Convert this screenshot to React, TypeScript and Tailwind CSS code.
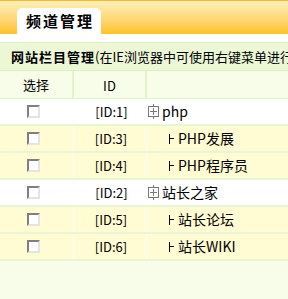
const rows = [
  { id: 1, name: "php", level: 0, odd: false },
  { id: 3, name: "PHP发展", level: 1, odd: true },
  { id: 4, name: "PHP程序员", level: 1, odd: true },
  { id: 2, name: "站长之家", level: 0, odd: false },
  { id: 5, name: "站长论坛", level: 1, odd: true },
  { id: 6, name: "站长WIKI", level: 1, odd: true },
];

function PlusBox() {
  return (
    <svg width="11" height="15" viewBox="0 0 11 15" className="shrink-0" shapeRendering="crispEdges">
      <line x1="5.5" y1="0" x2="5.5" y2="2" stroke="#777" />
      <rect x="0.5" y="2.5" width="10" height="10" fill="none" stroke="#777" />
      <line x1="2" y1="7.5" x2="9" y2="7.5" stroke="#777" />
      <line x1="5.5" y1="4" x2="5.5" y2="11" stroke="#777" />
      <line x1="5.5" y1="13" x2="5.5" y2="15" stroke="#777" />
    </svg>
  );
}

// tree connector "├"
function Branch() {
  return (
    <svg width="9" height="10" viewBox="0 0 9 10" className="shrink-0 mt-[1px]" shapeRendering="crispEdges">
      <line x1="1.5" y1="0" x2="1.5" y2="10" stroke="#000" />
      <line x1="1" y1="4.5" x2="6" y2="4.5" stroke="#000" />
    </svg>
  );
}

function Check() {
  return (
    <span className="inline-block w-[13px] h-[13px] bg-white border-[2px] border-t-[#7f7f7f] border-l-[#7f7f7f] border-r-[#e4e4e4] border-b-[#e4e4e4]" />
  );
}

export default function App() {
  return (
    <div
      className="w-[288px] h-[299px] bg-[#f7fde8] text-[13px] text-black overflow-hidden"
      style={{ fontFamily: '"Noto Sans CJK SC", "Liberation Sans", sans-serif' }}
    >
      {/* top tab bar */}
      <div className="h-[34px] border-t border-[#f5b82a] bg-gradient-to-b from-[#fff0b8] to-[#ffc21c] flex items-end pl-[17px]">
        <div className="w-[84px] h-[26px] bg-white rounded-t-[5px] flex items-center justify-center text-[15px] font-bold tracking-[2px] pl-[2px]">
          频道管理
        </div>
      </div>
      <div className="h-[8px] bg-white" />

      {/* title */}
      <div className="h-[29px] bg-[#ecf7d6] border-y border-[#dcefbf] flex items-center pl-[11px] whitespace-nowrap overflow-hidden">
        <b className="tracking-[1px] shrink-0">网站栏目管理</b>
        <span className="shrink-0">(在IE浏览器中可使用右键菜单进行</span>
      </div>

      {/* header */}
      <div className="h-[28px] flex bg-[#f7fde8] border-b border-[#e4f2c8]">
        <div className="w-[74px] border-r-2 border-[#e4f2c8] flex items-center justify-center">选择</div>
        <div className="w-[73px] border-r-2 border-[#e4f2c8] flex items-center justify-center pt-[2px]">ID</div>
        <div className="flex-1" />
      </div>

      {rows.map((r) => (
        <div
          key={r.id}
          className={`h-[27px] flex border-b-2 border-[#eaf5d6] ${r.odd ? "bg-[#fffbd2]" : "bg-white"}`}
        >
          <div className={`w-[74px] flex items-center pl-[27px] ${r.odd ? "border-r border-white" : ""}`}>
            <Check />
          </div>
          <div className={`w-[73px] flex items-center justify-center pl-[2px] ${r.odd ? "border-r border-white" : ""}`}>
            [ID:{r.id}]
          </div>
          <div className="flex-1 flex items-center pl-[1px] gap-[3px] whitespace-nowrap text-[14px]">
            {r.level === 0 ? (
              <>
                <PlusBox />
                <span>{r.name}</span>
              </>
            ) : (
              <div className="flex items-center pl-[20px] gap-[1px]">
                <Branch />
                <span>{r.name}</span>
              </div>
            )}
          </div>
        </div>
      ))}
    </div>
  );
}
